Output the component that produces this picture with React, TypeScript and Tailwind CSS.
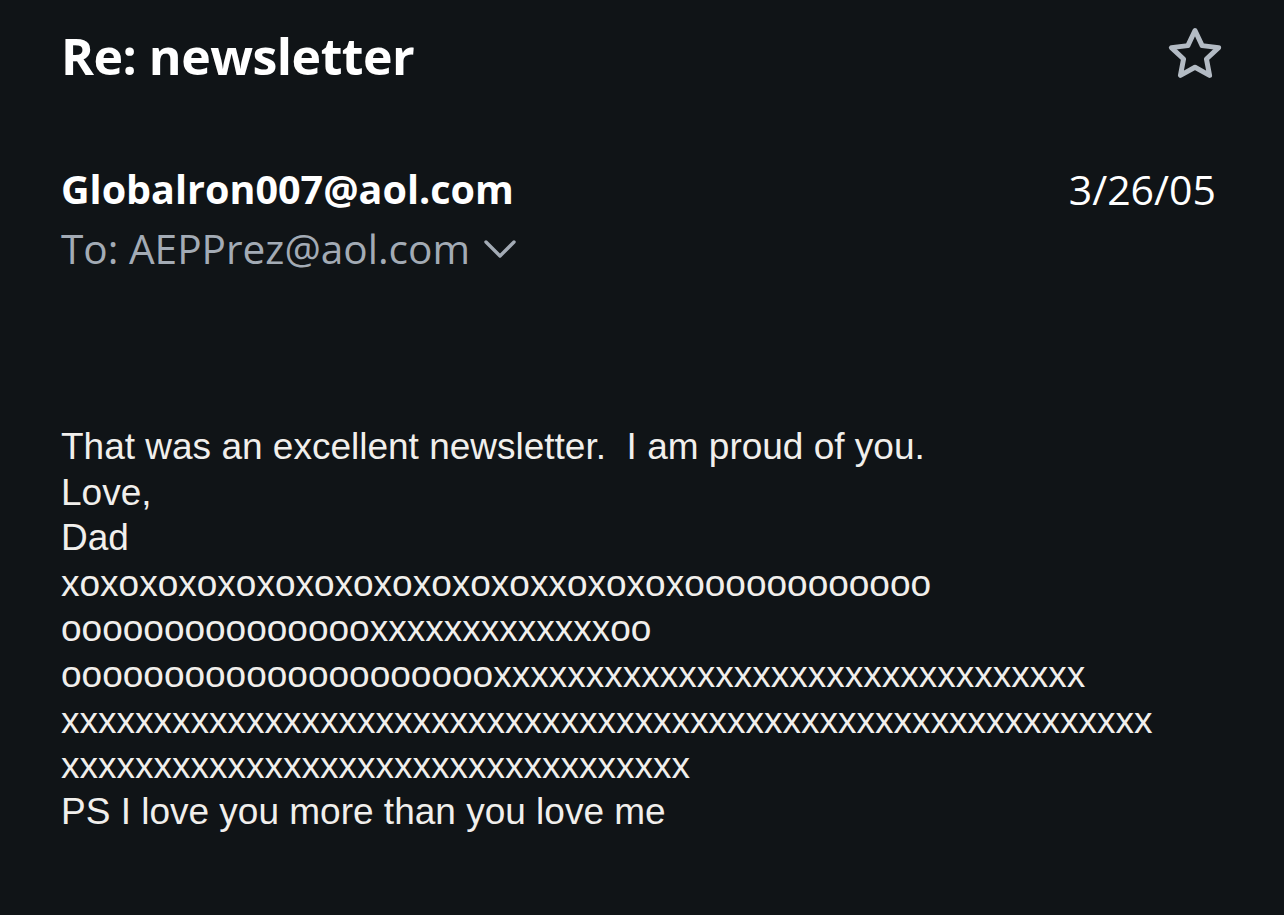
import React from "react";

const StarIcon = () => (
  <svg width="62" height="60" viewBox="0 0 24 24" fill="none" stroke="#b3bbc4" strokeWidth="2" strokeLinejoin="round">
    <path d="M12 2.6l2.85 6.05 6.6.8-4.87 4.55 1.25 6.55L12 17.3l-5.83 3.25 1.25-6.55L2.55 9.45l6.6-.8z" />
  </svg>
);

const Chevron = () => (
  <svg width="34" height="22" viewBox="0 0 34 22" fill="none" stroke="#a3abb5" strokeWidth="3.4" strokeLinecap="round" strokeLinejoin="round">
    <path d="M3 4l14 14L31 4" />
  </svg>
);

export default function App() {
  const lines = [
    "That was an excellent newsletter.\u00a0 I am proud of you.",
    "Love,",
    "Dad",
    "xoxoxoxoxoxoxoxoxoxoxoxoxxoxoxoxoooooooooooo",
    "oooooooooooooooxxxxxxxxxxxxxoo",
    "oooooooooooooooooooooxxxxxxxxxxxxxxxxxxxxxxxxxxxxxxxx",
    "xxxxxxxxxxxxxxxxxxxxxxxxxxxxxxxxxxxxxxxxxxxxxxxxxxxxxxxxxxx",
    "xxxxxxxxxxxxxxxxxxxxxxxxxxxxxxxxxx",
    "PS I love you more than you love me",
  ];
  return (
    <div className="min-h-[915px] w-full bg-[#101417] pl-[61px] pr-[62px] pt-[24px]" style={{ fontFamily: "'Open Sans', 'Noto Sans', sans-serif" }}>
      <div className="flex items-start justify-between">
        <h1 className="text-[50px] font-bold leading-[64px] tracking-[-0.5px] text-white">Re: newsletter</h1>
        <div className="mr-[-4px] mt-[0px]">
          <StarIcon />
        </div>
      </div>
      <div className="mt-[77px] flex items-start justify-between">
        <div className="flex flex-col">
          <div className="text-[39.5px] font-bold leading-[48px] text-white">Globalron007@aol.com</div>
          <div className="mt-[12px] flex items-center gap-[13px] text-[40.6px] leading-[48px] text-[#a3abb5]">
            <span>To: AEPPrez@aol.com</span>
            <Chevron />
          </div>
        </div>
        <div className="mr-[6px] text-[41px] leading-[48px] text-white">3/26/05</div>
      </div>
      <div
        className="mt-[151px] whitespace-pre text-[37px] leading-[45.6px] text-[#f1efec]"
        style={{ fontFamily: "'Liberation Sans', Arial, sans-serif" }}
      >
        {lines.map((l, i) => (
          <div key={i}>{l}</div>
        ))}
      </div>
    </div>
  );
}
